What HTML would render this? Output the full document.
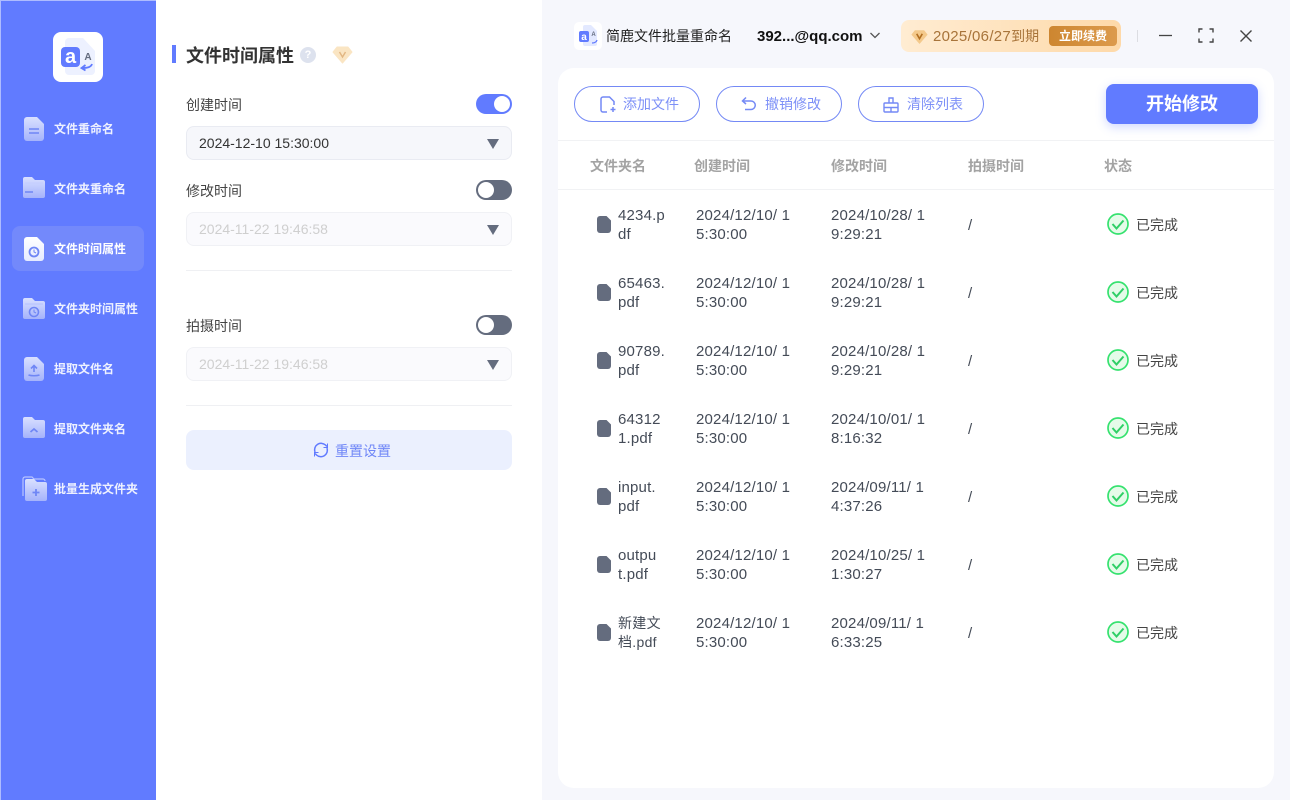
<!DOCTYPE html>
<html lang="zh"><head><meta charset="utf-8"><title>简鹿文件批量重命名</title>
<style>
*{box-sizing:border-box;margin:0;padding:0}
html,body{width:1290px;height:800px;overflow:hidden;background:#fff}
body{position:relative;font-family:"Liberation Sans","Noto Sans CJK SC",sans-serif;font-size:14px;color:#333}
.a{position:absolute;white-space:nowrap}
svg{position:absolute;display:block}
#side{position:absolute;left:0;top:0;width:156px;height:800px;background:#617bff;border-left:1px solid #aebcff;border-top:1px solid #aebcff}
.nav{position:absolute;left:53px;font-size:12px;font-weight:700;color:#eef1ff;line-height:18px;white-space:nowrap}
.lbl{position:absolute;left:186px;font-size:14px;color:#444;line-height:20px}
.sel{position:absolute;left:186px;width:326px;height:34px;border-radius:8px;background:#f6f7fb;border:1px solid #e9ebf2;padding-left:12px;line-height:32px;font-size:14px;color:#333}
.sel.d{background:#fafafd;border-color:#f0f1f5;color:#cfcfcf}
.sel i{position:absolute;right:12.500px;top:12px;width:0;height:0;border-left:6.500px solid transparent;border-right:6.500px solid transparent;border-top:10px solid #646c7e}
.sw{position:absolute;left:476px;width:36px;height:20px;border-radius:10px;background:#646c7e}
.sw b{position:absolute;left:2px;top:2px;width:16px;height:16px;border-radius:50%;background:#fff}
.sw.on{background:#617bff}.sw.on b{left:18px}
.hr{position:absolute;left:186px;width:326px;height:1px;background:#eff0f3}
.btn{position:absolute;top:86px;width:126px;height:36px;border:1px solid #7489f5;border-radius:18px;color:#7d90f7;font-size:14px;line-height:35px;padding-left:48px;background:#fff;white-space:nowrap}
.th{position:absolute;top:157px;font-size:14px;font-weight:700;color:#a3a3a3;line-height:18px;white-space:nowrap}
.c{position:absolute;font-size:15px;line-height:19px;color:#444b57;letter-spacing:.18px;white-space:nowrap}
.s{position:absolute;left:1136px;font-size:14px;line-height:18px;color:#444;white-space:nowrap}
</style></head><body>
<div style="position:absolute;left:542px;top:0;width:748px;height:800px;background:#f6f7fc"></div>
<div style="position:absolute;left:558px;top:68px;width:716px;height:720px;background:#fff;border-radius:16px"></div>

<div id="side">
<div style="position:absolute;left:52px;top:31px;width:50px;height:50px;border-radius:8px;background:#fff"></div>
<svg style="left:60px;top:37px" width="36" height="38" viewBox="0 0 36 38"><path d="M8 0h14l12 13v20a4 4 0 0 1-4 4H8a4 4 0 0 1-4-4V4a4 4 0 0 1 4-4z" fill="#edf1ff"/><rect x="0" y="9" width="19" height="20" rx="4" fill="#617bff"/><text x="9.500" y="25" font-size="20" font-weight="700" fill="#fff" text-anchor="middle" font-family="Liberation Sans,sans-serif">a</text><text x="27" y="22" font-size="10" font-weight="700" fill="#646c7e" text-anchor="middle" font-family="Liberation Sans,sans-serif">A</text><path d="M31 26c-1 3-4 4-10 4m3.500-3l-4 3 4 2.500" fill="none" stroke="#617bff" stroke-width="1.800"/></svg>

<div style="position:absolute;left:11px;top:225px;width:132px;height:45px;border-radius:8px;background:#7389fb"></div>
<svg width="0" height="0"><defs>
<linearGradient id="g" x1="0" y1="0" x2="0" y2="1"><stop offset="0" stop-color="#d9e0ff"/><stop offset="1" stop-color="#a5b3fb"/></linearGradient>
<linearGradient id="w" x1="0" y1="0" x2="0" y2="1"><stop offset="0" stop-color="#fff"/><stop offset="1" stop-color="#e6ebff"/></linearGradient>
</defs></svg>
<svg style="left:23px;top:116px" width="21" height="24" viewBox="0 0 21 24"><path d="M3 0h10l7 7v14a3 3 0 0 1-3 3H3a3 3 0 0 1-3-3V3a3 3 0 0 1 3-3z" fill="url(#g)"/><path d="M5 12h10M5 16h10" stroke="#6f86f5" stroke-width="1.600"/></svg>
<div class="nav" style="top:119px">文件重命名</div>
<svg style="left:22px;top:176px" width="22" height="22" viewBox="0 0 22 22"><path d="M2 0h7l3 3h8a2 2 0 0 1 2 2v14a2 2 0 0 1-2 2H2a2 2 0 0 1-2-2V2a2 2 0 0 1 2-2z" fill="url(#g)"/><path d="M2 6h18" stroke="#c3cdff"/><path d="M2 15h8" stroke="#6f86f5" stroke-width="1.500"/></svg>
<div class="nav" style="top:179px">文件夹重命名</div>
<svg style="left:23px;top:236px" width="21" height="24" viewBox="0 0 21 24"><path d="M3 0h10l7 7v14a3 3 0 0 1-3 3H3a3 3 0 0 1-3-3V3a3 3 0 0 1 3-3z" fill="url(#w)"/><circle cx="10" cy="15" r="4.500" fill="none" stroke="#6f86f5" stroke-width="1.800"/><path d="M10 12.500V15l2 1" fill="none" stroke="#6f86f5"/></svg>
<div class="nav" style="top:239px;color:#fff">文件时间属性</div>
<svg style="left:22px;top:297px" width="22" height="22" viewBox="0 0 22 22"><path d="M2 0h7l3 3h8a2 2 0 0 1 2 2v14a2 2 0 0 1-2 2H2a2 2 0 0 1-2-2V2a2 2 0 0 1 2-2z" fill="url(#g)"/><path d="M2 6h18" stroke="#b5c1ff"/><circle cx="11" cy="14" r="4.500" fill="none" stroke="#6f86f5" stroke-width="1.600"/><path d="M11 11.500V14l2 1" fill="none" stroke="#6f86f5"/></svg>
<div class="nav" style="top:299px">文件夹时间属性</div>
<svg style="left:23px;top:356px" width="21" height="24" viewBox="0 0 21 24"><path d="M3 0h10l7 7v14a3 3 0 0 1-3 3H3a3 3 0 0 1-3-3V3a3 3 0 0 1 3-3z" fill="url(#g)"/><path d="M10 15V9M7 11.500l3-3 3 3M4.500 18c3 1 8 1 11 0" fill="none" stroke="#6f86f5" stroke-width="1.600"/></svg>
<div class="nav" style="top:359px">提取文件名</div>
<svg style="left:22px;top:416px" width="22" height="22" viewBox="0 0 22 22"><path d="M2 0h7l3 3h8a2 2 0 0 1 2 2v14a2 2 0 0 1-2 2H2a2 2 0 0 1-2-2V2a2 2 0 0 1 2-2z" fill="url(#g)"/><path d="M7.500 15l3.500-3 3.500 3" fill="none" stroke="#6f86f5" stroke-width="1.700"/></svg>
<div class="nav" style="top:419px">提取文件夹名</div>
<svg style="left:21px;top:475px" width="26" height="26" viewBox="0 0 26 26"><path d="M1 20V3a2 2 0 0 1 2-2h7l2 2h9a2 2 0 0 1 2 2" fill="none" stroke="#b8c4ff" stroke-width="1.200"/><path d="M5 3h7l3 3h8a2 2 0 0 1 2 2v15a2 2 0 0 1-2 2H5a2 2 0 0 1-2-2V5a2 2 0 0 1 2-2z" fill="url(#g)"/><path d="M14 13v7M10.500 16.500h7" stroke="#6f86f5" stroke-width="1.800"/></svg>
<div class="nav" style="top:479px">批量生成文件夹</div>
</div>

<div style="position:absolute;left:172px;top:45px;width:4px;height:18px;background:#617bff"></div>
<div class="a" style="left:186px;top:44px;font-size:18px;font-weight:700;color:#333;line-height:24px">文件时间属性</div>
<div class="a" style="left:300px;top:47px;width:16px;height:16px;border-radius:50%;background:#dde2ee;color:#fff;font-size:11px;font-weight:700;text-align:center;line-height:16px">?</div>
<svg style="left:332px;top:45px" width="21" height="20" viewBox="0 0 21 20"><path d="M5 2h11l4 5-9.500 11L1 7z" fill="#fae5c3" stroke="#fae5c3" stroke-linejoin="round"/><path d="M7.500 7l3 5 3-5" fill="none" stroke="#e2b682" stroke-width="1.400"/></svg>

<div class="lbl" style="top:95px">创建时间</div>
<div class="sw on" style="top:94px"><b></b></div>
<div class="sel" style="top:126px">2024-12-10 15:30:00<i></i></div>
<div class="lbl" style="top:181px">修改时间</div>
<div class="sw" style="top:180px"><b></b></div>
<div class="sel d" style="top:212px">2024-11-22 19:46:58<i></i></div>
<div class="hr" style="top:270px"></div>
<div class="lbl" style="top:316px">拍摄时间</div>
<div class="sw" style="top:315px"><b></b></div>
<div class="sel d" style="top:347px">2024-11-22 19:46:58<i></i></div>
<div class="hr" style="top:405px"></div>
<div style="position:absolute;left:186px;top:430px;width:326px;height:40px;border-radius:8px;background:#ebf0fe"></div>
<svg style="left:313px;top:442px" width="16" height="16" viewBox="0 0 16 16" fill="none" stroke="#617bff" stroke-width="1.500"><path d="M2 10A6.500 6.500 0 0 1 12.500 3l1.500 1.500"/><path d="M14 6A6.500 6.500 0 0 1 3.500 13L2 11.500"/><path d="M14.500 1.500v4h-4M1.500 14.500v-4h4" stroke-width="1"/></svg>
<div class="a" style="left:335px;top:441px;font-size:14px;color:#7087f7;line-height:20px">重置设置</div>

<div style="position:absolute;left:574px;top:22px;width:28px;height:28px;border-radius:5px;background:#fff"></div>
<svg style="left:574px;top:22px" width="28" height="28" viewBox="0 0 28 28"><path d="M11 3h6l6 6v13a2 2 0 0 1-2 2H11a2 2 0 0 1-2-2V5a2 2 0 0 1 2-2z" fill="#e3e9ff"/><rect x="5" y="9" width="10" height="11" rx="2" fill="#617bff"/><text x="10" y="18" font-size="10" font-weight="700" fill="#fff" text-anchor="middle" font-family="Liberation Sans,sans-serif">a</text><text x="19.500" y="14" font-size="6" font-weight="700" fill="#646c7e" text-anchor="middle" font-family="Liberation Sans,sans-serif">A</text><path d="M23 18c-.5 2-2 3-5 3" fill="none" stroke="#617bff" stroke-width="1.300"/></svg>
<div class="a" style="left:606px;top:26px;font-size:14px;color:#222;line-height:20px">简鹿文件批量重命名</div>
<div class="a" style="left:757px;top:27px;font-size:15px;font-weight:700;color:#111;line-height:20px">392...@qq.com</div>
<svg style="left:869px;top:31px" width="12" height="9" viewBox="0 0 12 9"><path d="M1.500 2l4.500 4.500L10.500 2" fill="none" stroke="#555" stroke-width="1.300"/></svg>

<div style="position:absolute;left:901px;top:20px;width:220px;height:32px;border-radius:8px;background:linear-gradient(90deg,#ffecd2,#fed9a9)"></div>
<svg style="left:911px;top:29px" width="17" height="16" viewBox="0 0 21 20"><path d="M5 2h11l4 5-9.500 11L1 7z" fill="#f4c98b" stroke="#f4c98b" stroke-linejoin="round"/><path d="M7 6l3.500 6L14 6" fill="none" stroke="#b26f22" stroke-width="2"/></svg>
<div class="a" style="left:933px;top:26px;font-size:14px;color:#a8743a;line-height:20px"><span style="font-size:15px;letter-spacing:.3px">2025/06/27</span>到期</div>
<div class="a" style="left:1049px;top:26px;width:68px;height:20px;border-radius:4px;background:linear-gradient(90deg,#cd8630,#dc9a4c);color:#fff;font-size:12px;font-weight:700;text-align:center;line-height:20px">立即续费</div>
<div style="position:absolute;left:1137px;top:30px;width:1px;height:12px;background:#dcdde2"></div>
<svg style="left:1158px;top:28px" width="15" height="15"><path d="M1 7.500h13" stroke="#444" stroke-width="1.300"/></svg>
<svg style="left:1198px;top:28px" width="16" height="15" viewBox="0 0 16 15" fill="none" stroke="#444" stroke-width="1.400"><path d="M1 4.500V1h3.500M11.500 1H15v3.500M15 10.500V14h-3.500M4.500 14H1v-3.500"/></svg>
<svg style="left:1239px;top:29px" width="14" height="14"><path d="M1.500 1.500l11 11M12.500 1.500l-11 11" stroke="#444" stroke-width="1.400"/></svg>

<div class="btn" style="left:574px">添加文件</div>
<svg style="left:600px;top:96px" width="17" height="17" viewBox="0 0 17 17" fill="none" stroke="#7489f5" stroke-width="1.500"><path d="M7 16H3a2 2 0 0 1-2-2V3a2 2 0 0 1 2-2h6.500L14 5.500V9"/><path d="M13 11v5M10.500 13.500h5"/></svg>
<div class="btn" style="left:716px">撤销修改</div>
<svg style="left:741px;top:96px" width="16" height="16" viewBox="0 0 16 16" fill="none" stroke="#7489f5" stroke-width="1.500"><path d="M5 1.500L1.500 5 5 8"/><path d="M2 5h8a4 4 0 0 1 0 8.500H4"/></svg>
<div class="btn" style="left:858px">清除列表</div>
<svg style="left:883px;top:96px" width="16" height="17" viewBox="0 0 16 17" fill="none" stroke="#7489f5" stroke-width="1.400"><path d="M2 7h12a1 1 0 0 1 1 1v7a1 1 0 0 1-1 1H2a1 1 0 0 1-1-1V8a1 1 0 0 1 1-1zM6 7V2h4v5M1 11.500h14M8 12v4"/></svg>
<div class="a" style="left:1106px;top:84px;width:152px;height:40px;border-radius:8px;background:#617bff;box-shadow:0 3px 10px rgba(97,123,255,.3);color:#fff;font-size:18px;font-weight:700;text-align:center;line-height:40px">开始修改</div>
<div style="position:absolute;left:558px;top:140px;width:716px;height:1px;background:#f1f2f4"></div>
<div style="position:absolute;left:558px;top:189px;width:716px;height:1px;background:#f1f2f4"></div>
<div class="th" style="left:590px">文件夹名</div><div class="th" style="left:694px">创建时间</div><div class="th" style="left:831px">修改时间</div><div class="th" style="left:968px">拍摄时间</div><div class="th" style="left:1104px">状态</div>

<svg width="0" height="0"><defs>
<g id="f"><path d="M3 0h6.500L14 4.500V14a3 3 0 0 1-3 3H3a3 3 0 0 1-3-3V3a3 3 0 0 1 3-3z" fill="#646c7e"/></g>
<g id="k"><circle cx="11" cy="11" r="10" fill="#e5fbe9" stroke="#36e26f" stroke-width="1.700"/><path d="M5.500 11l4 4.500 7-8" fill="none" stroke="#2fcf66" stroke-width="2"/></g>
</defs></svg>

<svg style="left:597px;top:216px" width="14" height="17"><use href="#f"/></svg><div class="c" style="left:618px;top:206px">4234.p<br>df</div><div class="c" style="left:696px;top:206px">2024/12/10/ 1<br>5:30:00</div><div class="c" style="left:831px;top:206px">2024/10/28/ 1<br>9:29:21</div><div class="c" style="left:968px;top:216px">/</div><svg style="left:1107px;top:213px" width="22" height="22"><use href="#k"/></svg><div class="s" style="top:216px">已完成</div>
<svg style="left:597px;top:284px" width="14" height="17"><use href="#f"/></svg><div class="c" style="left:618px;top:274px">65463.<br>pdf</div><div class="c" style="left:696px;top:274px">2024/12/10/ 1<br>5:30:00</div><div class="c" style="left:831px;top:274px">2024/10/28/ 1<br>9:29:21</div><div class="c" style="left:968px;top:284px">/</div><svg style="left:1107px;top:281px" width="22" height="22"><use href="#k"/></svg><div class="s" style="top:284px">已完成</div>
<svg style="left:597px;top:352px" width="14" height="17"><use href="#f"/></svg><div class="c" style="left:618px;top:342px">90789.<br>pdf</div><div class="c" style="left:696px;top:342px">2024/12/10/ 1<br>5:30:00</div><div class="c" style="left:831px;top:342px">2024/10/28/ 1<br>9:29:21</div><div class="c" style="left:968px;top:352px">/</div><svg style="left:1107px;top:349px" width="22" height="22"><use href="#k"/></svg><div class="s" style="top:352px">已完成</div>
<svg style="left:597px;top:420px" width="14" height="17"><use href="#f"/></svg><div class="c" style="left:618px;top:410px">64312<br>1.pdf</div><div class="c" style="left:696px;top:410px">2024/12/10/ 1<br>5:30:00</div><div class="c" style="left:831px;top:410px">2024/10/01/ 1<br>8:16:32</div><div class="c" style="left:968px;top:420px">/</div><svg style="left:1107px;top:417px" width="22" height="22"><use href="#k"/></svg><div class="s" style="top:420px">已完成</div>
<svg style="left:597px;top:488px" width="14" height="17"><use href="#f"/></svg><div class="c" style="left:618px;top:478px">input.<br>pdf</div><div class="c" style="left:696px;top:478px">2024/12/10/ 1<br>5:30:00</div><div class="c" style="left:831px;top:478px">2024/09/11/ 1<br>4:37:26</div><div class="c" style="left:968px;top:488px">/</div><svg style="left:1107px;top:485px" width="22" height="22"><use href="#k"/></svg><div class="s" style="top:488px">已完成</div>
<svg style="left:597px;top:556px" width="14" height="17"><use href="#f"/></svg><div class="c" style="left:618px;top:546px">outpu<br>t.pdf</div><div class="c" style="left:696px;top:546px">2024/12/10/ 1<br>5:30:00</div><div class="c" style="left:831px;top:546px">2024/10/25/ 1<br>1:30:27</div><div class="c" style="left:968px;top:556px">/</div><svg style="left:1107px;top:553px" width="22" height="22"><use href="#k"/></svg><div class="s" style="top:556px">已完成</div>
<svg style="left:597px;top:624px" width="14" height="17"><use href="#f"/></svg><div class="c" style="left:618px;top:614px;font-size:14px;letter-spacing:.3px">新建文<br>档.pdf</div><div class="c" style="left:696px;top:614px">2024/12/10/ 1<br>5:30:00</div><div class="c" style="left:831px;top:614px">2024/09/11/ 1<br>6:33:25</div><div class="c" style="left:968px;top:624px">/</div><svg style="left:1107px;top:621px" width="22" height="22"><use href="#k"/></svg><div class="s" style="top:624px">已完成</div>
</body></html>
